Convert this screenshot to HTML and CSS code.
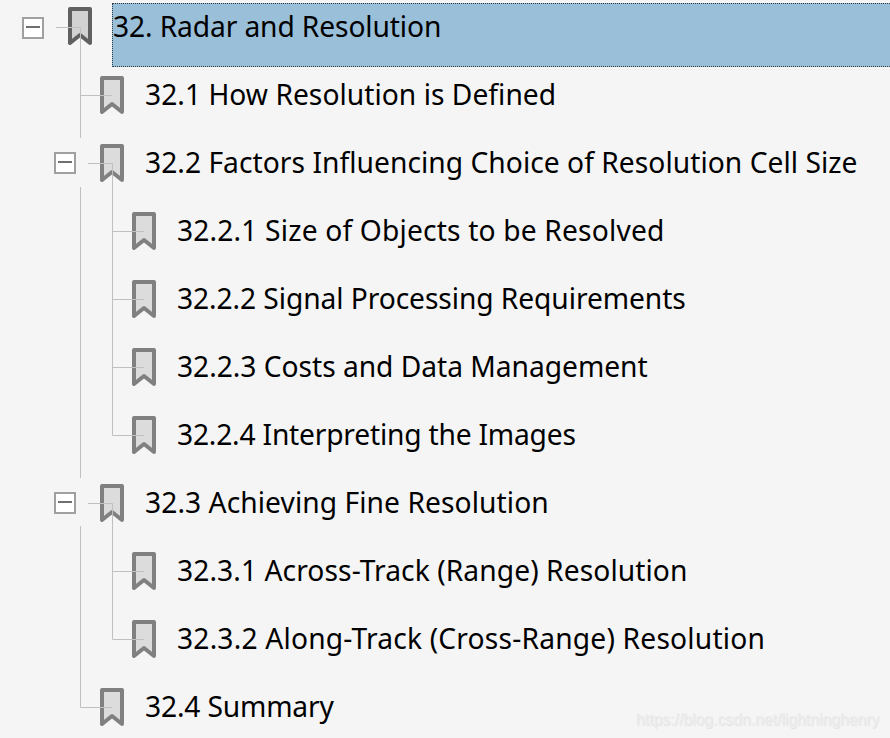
FILE: index.html
```html
<!DOCTYPE html>
<html lang="en">
<head>
<meta charset="utf-8">
<title>Bookmarks</title>
<link rel="stylesheet" href="styles.css">
</head>
<body>
<svg width="0" height="0" class="defs">
  <defs>
    <symbol id="bm" viewBox="0 0 24 38">
      <path class="bm-shape" d="M2 2H22V36L12 28L2 36Z"/>
    </symbol>
  </defs>
</svg>
<main class="tree">
  <div class="row level-0 first">
    <span class="toggle"><span class="box"></span></span>
    <svg class="mark dark"><use href="#bm"/></svg>
    <span class="label selected fit-n12">32. Radar and Resolution</span>
  </div>
  <div class="row level-1"><span class="toggle"></span><svg class="mark"><use href="#bm"/></svg><span class="label fit-p3">32.1 How Resolution is Defined</span></div>
  <div class="row level-1"><span class="toggle"><span class="box"></span></span><svg class="mark"><use href="#bm"/></svg><span class="label fit-p4">32.2 Factors Influencing Choice of Resolution Cell Size</span></div>
  <div class="row level-2"><span class="toggle"></span><svg class="mark"><use href="#bm"/></svg><span class="label fit-p17">32.2.1 Size of Objects to be Resolved</span></div>
  <div class="row level-2"><span class="toggle"></span><svg class="mark"><use href="#bm"/></svg><span class="label fit-n8">32.2.2 Signal Processing Requirements</span></div>
  <div class="row level-2"><span class="toggle"></span><svg class="mark"><use href="#bm"/></svg><span class="label fit-n3">32.2.3 Costs and Data Management</span></div>
  <div class="row level-2"><span class="toggle"></span><svg class="mark"><use href="#bm"/></svg><span class="label fit-n20">32.2.4 Interpreting the Images</span></div>
  <div class="row level-1"><span class="toggle"><span class="box"></span></span><svg class="mark"><use href="#bm"/></svg><span class="label fit-p7">32.3 Achieving Fine Resolution</span></div>
  <div class="row level-2"><span class="toggle"></span><svg class="mark"><use href="#bm"/></svg><span class="label fit-p8">32.3.1 Across-Track (Range) Resolution</span></div>
  <div class="row level-2"><span class="toggle"></span><svg class="mark"><use href="#bm"/></svg><span class="label fit-p19">32.3.2 Along-Track (Cross-Range) Resolution</span></div>
  <div class="row level-1"><span class="toggle"></span><svg class="mark"><use href="#bm"/></svg><span class="label fit-n17">32.4 Summary</span></div>
  <svg class="lines" width="890" height="738" viewBox="0 0 890 738">
    <path d="M56 27.5H80.5V138M80.5 187V478M80.5 526V707.5H112M80.5 95.5H112M88 163.5H112.5M88 503.5H112.5M112.5 163.5V435.5H144M112.5 231.5H144M112.5 299.5H144M112.5 367.5H144M112.5 503.5V639.5H144M112.5 571.5H144" fill="none" stroke="#c0c0c0" stroke-width="1"/>
  </svg>
</main>
<div class="watermark">https://blog.csdn.net/lightninghenry</div>
</body>
</html>
```
FILE: styles.css
```css
html, body {
  margin: 0;
  padding: 0;
  height: 738px;
  overflow: hidden;
  background: #f5f5f5;
}
body {
  position: relative;
  font-family: "Noto Sans", "Liberation Sans", sans-serif;
  color: #000;
}
.defs {
  position: absolute;
}
.tree {
  position: relative;
  height: 738px;
}
.row {
  display: flex;
  align-items: center;
  height: 68px;
}
.row.first {
  height: 61px;
  align-items: flex-start;
}
.level-0 { padding-left: 22px; }
.level-1 { padding-left: 54px; }
.level-2 { padding-left: 86px; }
.toggle {
  flex: none;
  width: 46px;
  display: flex;
  align-items: center;
}
.first .toggle {
  margin-top: 17px;
}
.box {
  position: relative;
  z-index: 1;
  box-sizing: border-box;
  width: 22px;
  height: 22px;
  border: 2px solid #a0a0a0;
  background: #fff;
}
.box::after {
  content: "";
  position: absolute;
  left: 2px;
  right: 2px;
  top: 7px;
  height: 2px;
  background: #707070;
}
.mark {
  flex: none;
  width: 24px;
  height: 38px;
  color: #808080;
  --bm-fill: #dcdcdc;
}
.mark.dark {
  color: #606060;
  --bm-fill: #d2d2d2;
  margin-top: 7px;
}
.bm-shape {
  fill: var(--bm-fill);
  stroke: currentColor;
  stroke-width: 4;
  stroke-linejoin: round;
}
.label {
  margin-left: 21px;
  padding-bottom: 2px;
  font-size: 28.2px;
  line-height: 40px;
  white-space: nowrap;
}
.label.selected {
  flex: 1;
  box-sizing: border-box;
  height: 64px;
  margin: 3px -2px 0 20px;
  padding: 3px 0 0 1px;
  background: #9abfd9;
  outline: 1px dotted #303c48;
  outline-offset: -1px;
}
.fit-n20 { letter-spacing: -0.20px; }
.fit-n17 { letter-spacing: -0.17px; }
.fit-n12 { letter-spacing: -0.12px; }
.fit-n8 { letter-spacing: -0.08px; }
.fit-n3 { letter-spacing: -0.03px; }
.fit-p3 { letter-spacing: 0.03px; }
.fit-p4 { letter-spacing: 0.04px; }
.fit-p7 { letter-spacing: 0.07px; }
.fit-p8 { letter-spacing: 0.08px; }
.fit-p17 { letter-spacing: 0.17px; }
.fit-p19 { letter-spacing: 0.19px; }
.lines {
  position: absolute;
  left: 0;
  top: 0;
  pointer-events: none;
}
.watermark {
  position: absolute;
  left: 636px;
  top: 710px;
  font-family: "Liberation Sans", sans-serif;
  font-size: 15.75px;
  line-height: 20px;
  color: #ececec;
  text-shadow: 1px 1px 1px #e2e2e2;
  white-space: nowrap;
}
```
